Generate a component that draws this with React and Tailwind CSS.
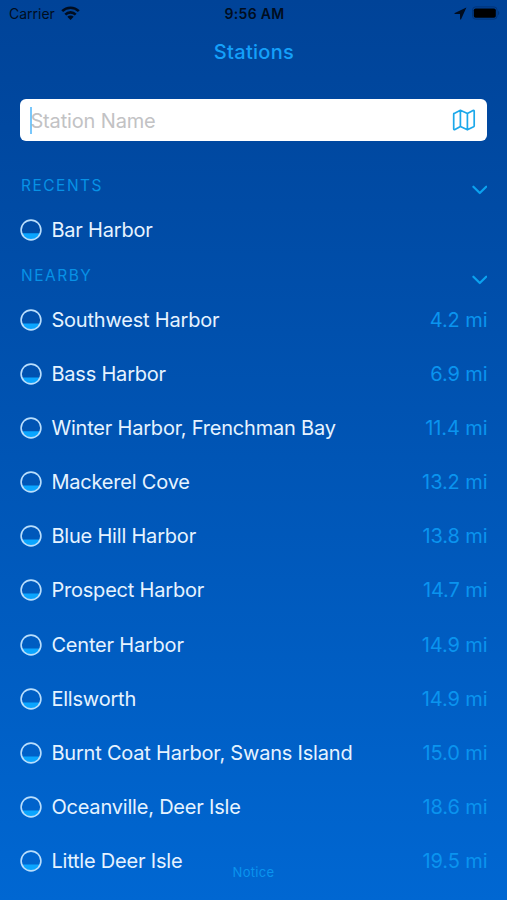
import React, { useState } from "react";

const recents = [{ name: "Bar Harbor", level: 14.2 }];

const nearby = [
  { name: "Southwest Harbor", distance: "4.2 mi", level: 14.6 },
  { name: "Bass Harbor", distance: "6.9 mi", level: 14.6 },
  { name: "Winter Harbor, Frenchman Bay", distance: "11.4 mi", level: 14.3 },
  { name: "Mackerel Cove", distance: "13.2 mi", level: 14.6 },
  { name: "Blue Hill Harbor", distance: "13.8 mi", level: 14.6 },
  { name: "Prospect Harbor", distance: "14.7 mi", level: 14.4 },
  { name: "Center Harbor", distance: "14.9 mi", level: 14.4 },
  { name: "Ellsworth", distance: "14.9 mi", level: 14.4 },
  { name: "Burnt Coat Harbor, Swans Island", distance: "15.0 mi", level: 14.4 },
  { name: "Oceanville, Deer Isle", distance: "18.6 mi", level: 14.4 },
  { name: "Little Deer Isle", distance: "19.5 mi", level: 14.4 },
];

function StatusBar() {
  return (
    <div className="grid h-7 grid-cols-3 items-center pl-[9px] pr-[7px] text-[14px] leading-none text-[#000d20]">
      <div className="flex items-center gap-[6px]">
        <span>Carrier</span>
        <svg width="19" height="14" viewBox="0 0 19 14" fill="none" stroke="currentColor" strokeWidth="2.6" className="-mt-[2px]">
          <path d="M1.2 5.2a11.7 11.7 0 0 1 16.6 0" />
          <path d="M4.3 8.6a7.3 7.3 0 0 1 10.4 0" />
          <path d="M9.5 14 6.3 10.8a4.5 4.5 0 0 1 6.4 0z" fill="currentColor" stroke="none" />
        </svg>
      </div>
      <div className="text-center font-semibold tracking-[0.3px]">9:56 AM</div>
      <div className="flex items-center justify-end gap-[5px]">
        <svg width="13" height="13" viewBox="0 0 13 13" fill="currentColor" className="-mt-px">
          <path d="M12.4.6.8 6c-.6.3-.5.9.2.9l5 .1.1 5c0 .7.7.8 1 .2z" />
        </svg>
        <svg width="28" height="14" viewBox="0 0 28 14" className="-mt-[2px]">
          <rect x=".6" y=".9" width="24.4" height="12.2" rx="3" fill="none" stroke="#003478" />
          <rect x="1.8" y="2.4" width="22" height="9.4" rx="1.8" fill="#000" />
          <path d="M26 4.8v4.4c1.8-.8 1.8-3.6 0-4.4z" fill="#003478" />
        </svg>
      </div>
    </div>
  );
}

function TideIcon({ level }) {
  // Half width of the circle at the water line
  const dy = level - 11;
  const half = Math.sqrt(100 - dy * dy);

  return (
    <svg width="22" height="22" viewBox="0 0 22 22" className="shrink-0">
      <path d={`M${11 - half} ${level}H${11 + half}A10 10 0 0 1 ${11 - half} ${level}z`} fill="#0aa5ff" />
      <circle cx="11" cy="11" r="9.9" fill="none" stroke="#b9defc" strokeWidth="1.6" />
    </svg>
  );
}

function StationRow({ station }) {
  return (
    <li className="flex h-[54.15px] items-center">
      <TideIcon level={station.level} />
      <span className="ml-[9px] flex-1 whitespace-nowrap text-[20px] tracking-[-0.2px] text-[#e6f3ff]">
        {station.name}
      </span>
      {station.distance && (
        <span className="text-[20px] tracking-[-0.1px] text-[#0a94ef]">{station.distance}</span>
      )}
    </li>
  );
}

function Section({ title, stations }) {
  const [open, setOpen] = useState(true);

  return (
    <section>
      <button
        type="button"
        onClick={() => setOpen((v) => !v)}
        aria-expanded={open}
        className="flex h-9 w-full items-center justify-between text-[#0792e6]"
      >
        <span className="mt-[3px] pl-[0.6px] text-[15.5px] leading-5 tracking-[1.5px]">{title}</span>
        <svg
          width="16"
          height="10"
          viewBox="0 0 16 10"
          fill="none"
          stroke="#0ba2ef"
          strokeWidth="2.2"
          strokeLinecap="round"
          strokeLinejoin="round"
          className={`mt-[10px] ${open ? "" : "rotate-180"}`}
        >
          <path d="m2.4 1.7 6.4 6.3 6.4-6.3" />
        </svg>
      </button>
      {open && (
        <ul>
          {stations.map((station) => (
            <StationRow key={station.name} station={station} />
          ))}
        </ul>
      )}
    </section>
  );
}

export default function App() {
  return (
    <div className="relative h-[900px] w-full overflow-hidden bg-linear-to-b from-[#004398] to-[#0067d2] font-['Inter','Liberation_Sans',sans-serif]">
      <StatusBar />

      <h1 className="mt-2 pl-px text-center text-[20px] font-medium leading-8 tracking-[0.3px] text-[#14a0fa]">
        Stations
      </h1>

      <div className="pl-[20.4px] pr-[19.6px] pt-[31px]">
        <div className="mb-[25.5px] flex h-[42px] items-center rounded-md bg-white pl-[10px] pr-[11px]">
          <div className="h-[27px] w-[2px] bg-[#79c7fb]" />
          <span className="-ml-[2px] mt-px flex-1 text-[20px] tracking-[-0.15px] text-[#c2c2c4]">Station Name</span>
          <svg
            width="24"
            height="22"
            viewBox="0 0 24 22"
            fill="none"
            stroke="#1ba8ea"
            strokeWidth="1.7"
            strokeLinejoin="round"
          >
            <path d="M2.2 4.4 8.4 1.3l7 3.2 5.6-2.9q1.2-.5 1.2.7v14.5q0 .6-.6 1l-6.2 3-7-3.3-5.4 3q-1.3.6-1.3-.7V5q0-.4.5-.6zM8.4 1.3v16.2M15.4 4.5v16.2" />
          </svg>
        </div>

        <Section title="RECENTS" stations={recents} />
        <Section title="NEARBY" stations={nearby} />
      </div>

      <button type="button" className="absolute bottom-[18px] left-1/2 -translate-x-1/2 text-[13px] leading-5 tracking-[0.3px] text-[#0a94ee]">
        Notice
      </button>
    </div>
  );
}
